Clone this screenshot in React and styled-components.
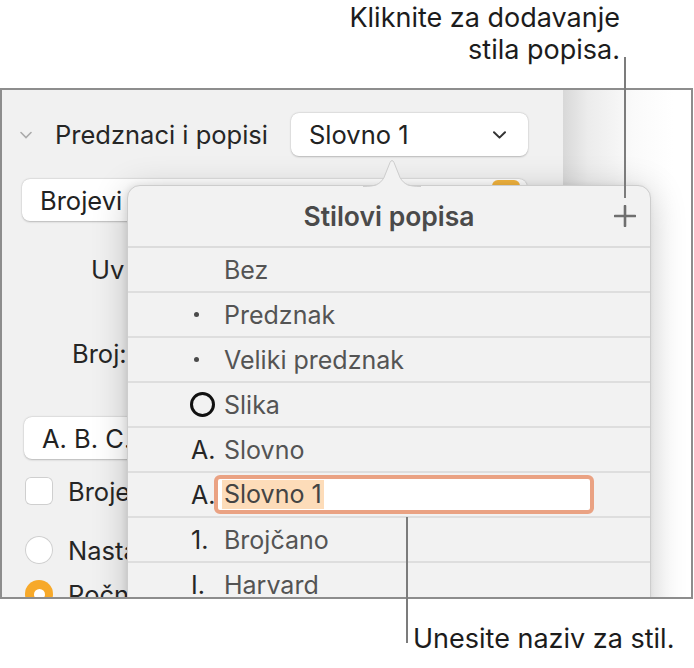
import React from "react";
import styled, { createGlobalStyle } from "styled-components";

const GlobalStyle = createGlobalStyle`
  html, body { margin: 0; padding: 0; background: #fff; }
  body { font-family: Inter, "Noto Sans", sans-serif; -webkit-font-smoothing: antialiased; }
  * { box-sizing: border-box; }
`;

const Page = styled.div`
  position: relative;
  width: 694px;
  height: 668px;
  overflow: hidden;
  background: #fff;
`;

const TopNote = styled.div`
  height: 88px;
  width: 620px;
  padding-top: 2px;
  text-align: right;
  font-size: 27px;
  line-height: 32px;
  color: #1c1c1c;
`;

const BottomNote = styled.div`
  margin-top: 24px;
  padding-left: 413px;
  font-size: 27px;
  line-height: 32px;
  color: #1c1c1c;
  white-space: nowrap;
`;

const Leader = styled.div`
  position: absolute;
  left: ${(p) => p.$x}px;
  top: ${(p) => p.$y}px;
  width: 2px;
  height: ${(p) => p.$h}px;
  background: #7c7c7c;
`;

const Frame = styled.div`
  position: relative;
  display: flex;
  width: 693px;
  height: 511px;
  border: 2px solid #8d8d8d;
  overflow: hidden;
`;

const Sidebar = styled.div`
  width: 561px;
  flex: none;
  background: #f1f1f1;
  display: flex;
  flex-direction: column;
  font-size: 25.5px;
  color: #262626;
`;

const Canvas = styled.div`
  flex: 1;
  background: linear-gradient(to right, #d8d8d8 0, #ececec 25px, #fafafa 70px, #fff 110px);
`;

const SectionHeader = styled.div`
  display: flex;
  align-items: center;
  height: 44px;
  margin-top: 23px;
  padding: 0 35px 0 18px;
`;

const Disclosure = styled.svg`
  width: 12px;
  height: 8px;
  margin-right: 23px;
  flex: none;
`;

const SectionTitle = styled.div`
  flex: 1;
  white-space: nowrap;
`;

const PopupButton = styled.div`
  display: flex;
  align-items: center;
  justify-content: space-between;
  flex: none;
  width: ${(p) => p.$w}px;
  height: ${(p) => p.$h || 42}px;
  margin-left: ${(p) => p.$left || 0}px;
  margin-top: ${(p) => p.$top || 0}px;
  padding: 0 22px 0 18px;
  background: #fff;
  border-radius: 8px;
  box-shadow: 0 0.5px 2px rgba(0, 0, 0, 0.22), 0 0 0 0.5px rgba(0, 0, 0, 0.05);
  white-space: nowrap;
  color: #222;
`;

const Swatch = styled.div`
  align-self: flex-start;
  margin-top: 1px;
  margin-right: -15px;
  width: 28px;
  height: 24px;
  border-radius: 6px;
  background: #f5b63f;
`;

const FieldLabel = styled.div`
  height: 30px;
  line-height: 30px;
  margin-top: ${(p) => p.$top}px;
  padding-left: ${(p) => p.$left}px;
  white-space: nowrap;
`;

const OptionRow = styled.div`
  display: flex;
  align-items: center;
  gap: 15px;
  height: 28px;
  margin-top: ${(p) => p.$top}px;
  padding-left: 23px;
  white-space: nowrap;
`;

const CheckBox = styled.div`
  width: 28px;
  height: 28px;
  flex: none;
  background: #fff;
  border-radius: 6px;
  box-shadow: inset 0 0 0 1px #cfcfcf;
`;

const Radio = styled.div`
  width: 28px;
  height: 28px;
  flex: none;
  border-radius: 50%;
  background: ${(p) => (p.$on ? "#f7a92a" : "#fff")};
  box-shadow: ${(p) => (p.$on ? "none" : "inset 0 0 0 1px #cfcfcf")};
  display: flex;
  align-items: center;
  justify-content: center;
  &::after {
    content: "";
    display: ${(p) => (p.$on ? "block" : "none")};
    width: 11px;
    height: 11px;
    border-radius: 50%;
    background: #fff;
  }
`;

const Popover = styled.div`
  position: absolute;
  left: 125px;
  top: 95px;
  width: 524px;
  height: 460px;
  background: #f2f2f2;
  border: 1px solid #cdcdcd;
  border-radius: 13px;
  box-shadow: 0 6px 36px rgba(0, 0, 0, 0.2), -2px 0 6px rgba(0, 0, 0, 0.08);
`;

const Arrow = styled.svg`
  position: absolute;
  left: 235px;
  top: -27px;
  width: 58px;
  height: 28px;
  overflow: visible;
`;

const PopoverHeader = styled.div`
  display: grid;
  grid-template-columns: 1fr auto 1fr;
  align-items: center;
  height: 62px;
  border-bottom: 2px solid #dcdcdc;
`;

const PopoverTitle = styled.div`
  grid-column: 2;
  font-size: 26.5px;
  font-weight: 600;
  color: #4a4a4a;
  white-space: nowrap;
`;

const AddButton = styled.svg`
  justify-self: end;
  margin-right: 14px;
  width: 22px;
  height: 22px;
`;

const StyleRow = styled.div`
  display: flex;
  align-items: center;
  height: 45px;
  border-bottom: 2px solid #dedede;
  font-size: 25px;
  color: #545454;
  white-space: nowrap;
`;

const Marker = styled.div`
  width: 96px;
  flex: none;
  display: flex;
  align-items: center;
  padding-left: ${(p) => p.$pad || 63}px;
  color: #262626;
`;

const Dot = styled.span`
  width: 5px;
  height: 5px;
  border-radius: 50%;
  background: #4a4a4a;
`;

const Ring = styled.span`
  width: 25px;
  height: 25px;
  border-radius: 50%;
  border: 3.5px solid #111;
`;

const NameInput = styled.div`
  display: flex;
  align-items: center;
  width: 380px;
  height: 39px;
  margin-left: -10px;
  padding-left: 4px;
  background: #fff;
  border: 4px solid #eaa283;
  border-radius: 6px;
  color: #444;
`;

const Selected = styled.span`
  background: #fddcb9;
  padding: 0 2px 0 2px;
  line-height: 29px;
`;

function Chevron({ color = "#333", w = 2 }) {
  return (
    <svg width="13" height="8" viewBox="0 0 13 8">
      <path d="M1 1.2 L6.5 6.6 L12 1.2" fill="none" stroke={color} strokeWidth={w} strokeLinecap="round" strokeLinejoin="round" />
    </svg>
  );
}

const styles = [
  { marker: null, name: "Bez" },
  { marker: "dot", name: "Predznak" },
  { marker: "dot", name: "Veliki predznak" },
  { marker: "ring", name: "Slika" },
  { marker: "A.", name: "Slovno" },
  { marker: "A.", name: "Slovno 1", editing: true },
  { marker: "1.", name: "Brojčano" },
  { marker: "I.", name: "Harvard" },
];

function renderMarker(m) {
  if (m === "dot") return <Marker $pad={66}><Dot /></Marker>;
  if (m === "ring") return <Marker $pad={62}><Ring /></Marker>;
  return <Marker>{m}</Marker>;
}

export default function App() {
  return (
    <Page>
      <GlobalStyle />
      <TopNote>
        Kliknite za dodavanje
        <br />
        stila popisa.
      </TopNote>
      <Frame>
        <Sidebar>
          <SectionHeader>
            <Disclosure viewBox="0 0 12 8">
              <path d="M1 1.5 L6 6.5 L11 1.5" fill="none" stroke="#ababab" strokeWidth="1.6" strokeLinecap="round" />
            </Disclosure>
            <SectionTitle>Predznaci i popisi</SectionTitle>
            <PopupButton $w={237} $h={43}>
              <span>Slovno 1</span>
              <Chevron />
            </PopupButton>
          </SectionHeader>
          <PopupButton $w={505} $left={20} $top={23}>
            <span>Brojevi</span>
            <Swatch />
          </PopupButton>
          <FieldLabel $top={34} $left={89}>Uv uvlaka</FieldLabel>
          <FieldLabel $top={54} $left={70}>Broj:</FieldLabel>
          <PopupButton $w={300} $left={22} $top={48}>
            <span>A. B. C.</span>
          </PopupButton>
          <OptionRow $top={18}>
            <CheckBox />
            <span>Brojevi</span>
          </OptionRow>
          <OptionRow $top={31}>
            <Radio />
            <span>Nastavi</span>
          </OptionRow>
          <OptionRow $top={16}>
            <Radio $on />
            <span>Počni od:</span>
          </OptionRow>
        </Sidebar>
        <Canvas />
        <Popover>
          <Arrow viewBox="0 0 58 28">
            <path
              d="M0 28 C12 28 17 26 21 19 L27 3.5 Q29 -0.5 31 3.5 L37 19 C41 26 46 28 58 28 Z"
              fill="#f2f2f2"
            />
            <path
              d="M0 27.5 C12 27.5 17 25.5 21 18.5 L27 3.5 Q29 -0.5 31 3.5 L37 18.5 C41 25.5 46 27.5 58 27.5"
              fill="none"
              stroke="#cdcdcd"
              strokeWidth="1"
            />
            <rect x="0" y="28" width="58" height="2" fill="#f2f2f2" />
          </Arrow>
          <PopoverHeader>
            <PopoverTitle>Stilovi popisa</PopoverTitle>
            <AddButton viewBox="0 0 22 22">
              <path d="M11 1 V21 M1 11 H21" stroke="#6f6f6f" strokeWidth="2.6" strokeLinecap="round" />
            </AddButton>
          </PopoverHeader>
          {styles.map((s) => (
            <StyleRow key={s.name}>
              {renderMarker(s.marker)}
              {s.editing ? (
                <NameInput>
                  <Selected>{s.name}</Selected>
                </NameInput>
              ) : (
                <span>{s.name}</span>
              )}
            </StyleRow>
          ))}
        </Popover>
      </Frame>
      <BottomNote>Unesite naziv za stil.</BottomNote>
      <Leader $x={624} $y={57} $h={141} />
      <Leader $x={406} $y={517} $h={126} />
    </Page>
  );
}
